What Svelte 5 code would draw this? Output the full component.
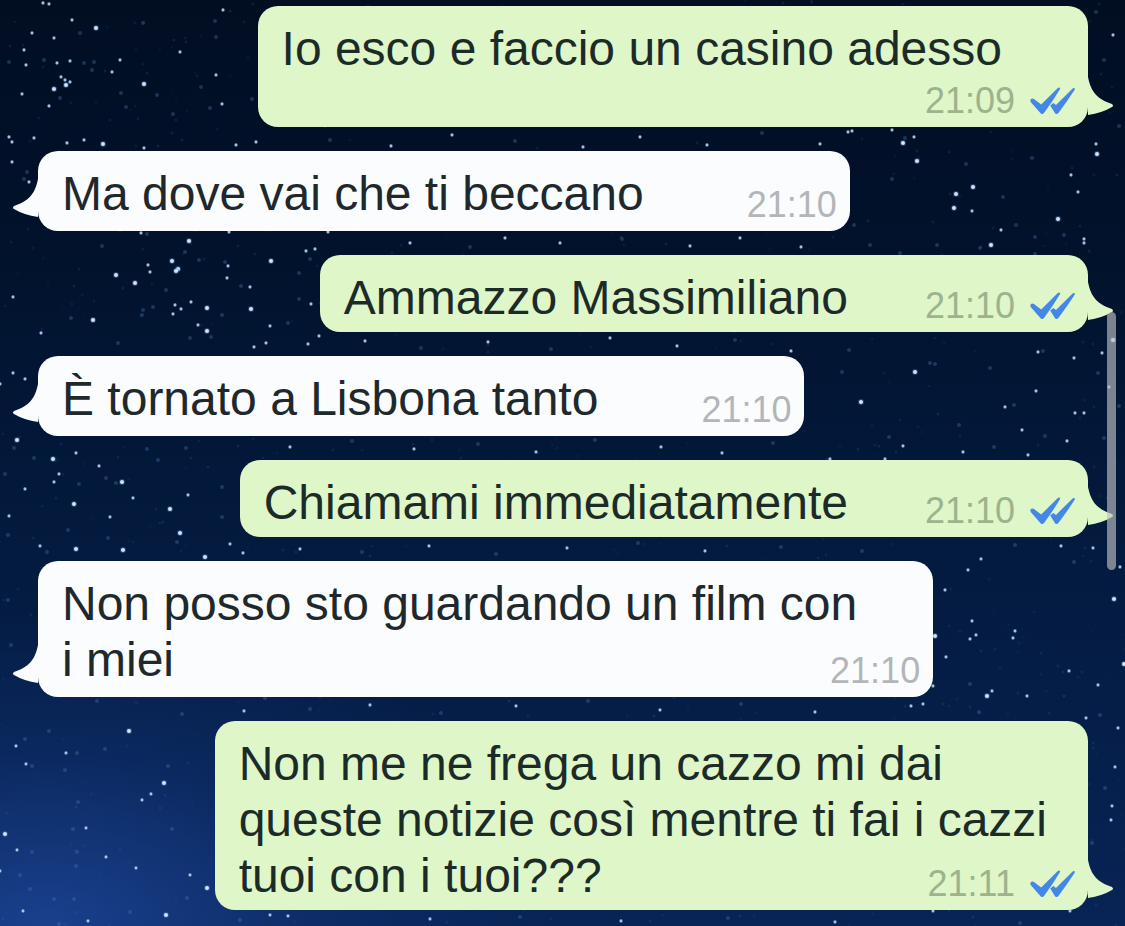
<script>
  const messages = [
    { side: 'out', fit: 'below', time: '21:09', lines: ['Io esco e faccio un casino adesso'] },
    { side: 'in', fit: 'beside', time: '21:10', lines: ['Ma dove vai che ti beccano'] },
    { side: 'out', fit: 'beside', time: '21:10', lines: ['Ammazzo Massimiliano'] },
    { side: 'in', fit: 'beside', time: '21:10', lines: ['È tornato a Lisbona tanto'] },
    { side: 'out', fit: 'beside', time: '21:10', lines: ['Chiamami immediatamente'] },
    { side: 'in', fit: 'tucked', time: '21:10', lines: ['Non posso sto guardando un film con', 'i miei'] },
    {
      side: 'out',
      fit: 'tucked',
      time: '21:11',
      lines: ['Non me ne frega un cazzo mi dai', 'queste notizie così mentre ti fai i cazzi', 'tuoi con i tuoi???'],
    },
  ];

  // x, y, brightness (1 faint, 2 medium, 3 bright)
  const stars = [
    [43,3,2],[49,4,2],[72,20,2],[96,28,3],[32,33,2],[54,38,2],[24,50,2],[26,65,2],[44,60,1],[57,63,2],[70,61,2],[84,63,1],[94,62,1],[120,60,2],[112,72,2],[92,70,1],[61,77,2],[65,80,2],[66,85,3],[70,82,2],[54,89,3],[60,98,1],[22,94,2],[144,84,3],[49,106,2],[9,62,1],[80,33,1],[143,23,1],[180,52,2],[223,10,2],[215,21,1],[216,37,1],[216,75,2],[222,104,2],[201,87,1],[210,108,1],[173,114,1],[126,107,1],[121,93,1],[157,95,1],[252,99,1],[9,137,2],[12,142,2],[34,138,2],[67,143,2],[84,140,2],[103,144,3],[144,148,2],[236,145,2],[256,142,2],
    [12,162,2],[27,172,1],[24,179,1],[29,182,2],[102,246,1],[141,233,2],[147,234,1],[189,241,3],[185,252,1],[229,232,2],[328,232,2],[172,261,3],[199,260,1],[148,265,2],[150,272,2],[178,269,3],[176,271,3],[116,275,3],[135,283,3],[225,262,1],[228,266,2],[227,278,2],[271,261,3],[241,286,1],[250,287,2],[306,251,2],[315,249,2],[310,259,1],[299,273,1],[13,297,2],[71,318,1],[93,320,3],[41,333,2],[153,307,1],[166,290,1],[142,315,1],[143,310,1],[175,305,2],[191,302,2],[181,309,2],[173,314,2],[207,308,3],[251,309,3],[198,325,2],[207,331,3],[211,337,1],[190,338,1],[270,326,2],[311,304,2],[299,299,1],[254,347,2],[266,343,2],[308,344,2],[319,336,2],[118,343,1],[222,315,1],[288,323,1],
    [892,130,2],[914,137,2],[903,143,3],[905,138,1],[917,161,3],[848,132,2],[852,131,2],[892,179,1],[966,164,1],[973,187,3],[956,194,3],[954,208,3],[972,211,2],[1001,230,2],[1016,225,1],[1035,237,1],[991,245,3],[980,248,1],[937,245,1],[1058,219,3],[1078,192,2],[1071,175,2],[1096,144,2],[1097,154,3],[1084,239,2],[1084,243,2],[1032,158,1],[854,225,1],[1003,197,1],[900,253,1],[1035,254,1],[1064,235,1],
    [849,350,1],[915,372,3],[861,402,3],[842,372,1],[1038,352,2],[1043,351,1],[1074,358,2],[1102,353,2],[1113,340,3],[1109,387,2],[1036,391,2],[1005,407,2],[1014,405,1],[990,368,1],[1075,413,2],[1084,413,2],[1022,430,2],[1045,436,1],[1067,441,2],[1028,455,2],[963,452,2],[994,447,1],[903,446,2],[885,459,2],[830,459,2],[889,437,1],[959,425,1],[1119,406,1],[1098,373,1],[935,364,1],[1104,438,1],[930,363,1],
    [13,373,2],[25,379,2],[0,384,2],[17,440,3],[14,448,1],[53,459,3],[34,458,1],[76,453,2],[59,474,2],[54,482,2],[25,489,2],[5,474,1],[99,466,2],[122,482,3],[133,498,2],[74,504,3],[9,516,2],[110,517,2],[40,546,2],[76,549,3],[123,550,3],[47,552,1],[180,533,3],[205,557,3],[170,509,3],[188,495,2],[222,487,1],[222,517,1],[186,448,1],[158,460,1],[147,449,1],[177,542,1],[230,544,2],[243,553,2],[106,478,1],[79,484,1],[116,483,1],[108,538,1],[68,530,1],[8,535,1],
    [862,551,1],[981,559,2],[968,570,2],[1015,545,1],[1061,546,2],[1093,548,2],[1074,562,1],[1120,567,2],[945,590,2],[972,621,2],[935,636,3],[976,635,2],[970,639,2],[1015,631,2],[1013,638,2],[1114,599,3],[946,657,2],[933,686,2],[1069,671,2],[1098,685,2],[1124,664,3],[987,696,3],[992,691,2],[1027,696,2],[970,684,1],[911,706,2],[923,704,2],[979,712,1],[1086,718,2],[1100,715,1],[1118,728,2],[1115,767,2],[1105,788,1],[1112,806,2],[1111,820,2],[1092,843,1],[1070,911,2],[933,911,2],[1020,923,1],
    [8,600,1],[11,645,1],[97,701,1],[129,731,3],[49,731,1],[25,739,1],[16,746,2],[66,753,2],[77,753,1],[26,764,2],[32,766,1],[105,749,1],[65,770,1],[164,783,3],[151,794,2],[142,800,2],[168,766,1],[78,802,1],[86,828,2],[73,829,1],[5,834,3],[17,850,2],[32,852,1],[106,857,2],[136,868,2],[77,852,1],[76,866,1],[172,829,1],[190,875,2],[207,888,3],[0,871,2],[20,875,1],[30,889,1],[54,899,1],[74,899,1],[166,915,3],[88,921,2],[23,911,2],[130,912,1],[187,898,1],[270,915,2],[288,916,2],[240,920,1],[59,924,1],[244,711,2],[182,714,1],[265,698,1],
    [300,549,2],[410,243,2],[470,247,1],[505,238,2],[560,243,2],[622,239,1],[690,246,2],[740,238,2],[801,247,2],[870,245,1],[330,140,1],[391,146,2],[452,135,2],[515,141,1],[583,147,2],[640,137,2],[707,145,2],[762,133,1],[820,144,2],[365,341,2],[421,348,1],[488,342,2],[551,349,1],[610,338,2],[677,346,2],[735,340,1],[791,351,2],[290,447,2],[352,441,1],[414,449,2],[478,444,1],[536,452,2],[595,440,1],[661,447,2],[722,453,2],[773,443,1],[362,552,1],[429,546,2],[496,554,1],[567,548,2],[638,543,1],[705,551,2],[781,547,1],[310,709,1],[370,705,2],[441,713,1],[516,706,2],[588,701,1],[660,710,2],[741,704,1],[815,712,2],[1096,12,1],[1113,35,2],[1104,60,1],[1119,126,1],[430,919,2],[520,917,1],[621,921,2],[728,918,1],[835,922,2],
  ];

  // Faint background dust from a small repeatable generator
  let seed = 7;
  const next = () => (seed = (seed * 16807) % 2147483647) / 2147483647;
  const dust = Array.from({ length: 1500 }, () => [Math.round(next() * 1600), Math.round(next() * 1100), next()]);
</script>

{#snippet meta(m)}
  <span class="meta">
    <time>{m.time}</time>
    {#if m.side === 'out'}
      <svg class="ticks" viewBox="0 0 45 28" role="img" aria-label="Letto">
        <path d="M.6 12.4Q2 10.8 4 11.9L11.2 17.6 27.8 .9Q29.8-.2 30.2 1.8Q23 14 14 26Q12.3 28 10.8 26.4L.9 15.2Q0 13.8.6 12.4Z" />
        <path d="M20.2 18.4L23.4 15.9 26 17.9 42.6 1.4Q44.6.3 45 2.3Q37.5 14 28.4 26Q26.7 28 25.2 26.4Z" />
      </svg>
    {/if}
  </span>
{/snippet}

<main class="chat">
  <svg class="sky" aria-hidden="true">
    {#each dust as [x, y, a]}
      <circle cx={x} cy={y} r="1.5" fill="#3c67a8" opacity={0.06 + a * 0.16} />
    {/each}
    {#each stars as [x, y, b]}
      <circle cx={x} cy={y} r={b === 3 ? 3 : 2} fill="#4d79b5" opacity={b === 1 ? 0.35 : 0.45} />
      {#if b > 1}
        <circle cx={x} cy={y} r={b === 3 ? 2 : 1.4} fill="#dcebff" opacity={b === 3 ? 0.95 : 0.75} />
      {/if}
    {/each}
  </svg>

  <ol class="messages">
    {#each messages as m}
      <li class="bubble {m.side} {m.fit}">
        {#each m.lines as line, i}
          {#if i === m.lines.length - 1}
            <div class="last">
              <span class="line">{line}</span>
              {@render meta(m)}
            </div>
          {:else}
            <div class="line">{line}</div>
          {/if}
        {/each}
        <svg class="tail" viewBox="0 0 26 40" aria-hidden="true">
          <path d="M0 0C3 15 9 22 24 27Q26 29 24 30Q14 36 0 38Z" />
        </svg>
      </li>
    {/each}
  </ol>
  <div class="scrollbar"></div>
</main>

<style>
  :global(body) {
    margin: 0;
    background: #04183a;
  }

  .chat {
    position: relative;
    box-sizing: border-box;
    min-height: 100vh;
    padding: 6px 37px 16px 38px;
    overflow: hidden;
    font-family: 'Liberation Sans', Arial, sans-serif;
    background:
      radial-gradient(ellipse 46% 34% at 4% 100%, rgba(34, 76, 165, 0.7), rgba(20, 58, 130, 0.35) 55%, transparent),
      linear-gradient(to bottom, #010e22 0%, #01122c 28%, #03193b 52%, #051e48 76%, #082456 100%);
  }

  .sky {
    position: absolute;
    inset: 0;
    width: 100%;
    height: 100%;
  }

  .messages {
    position: relative;
    display: flex;
    flex-direction: column;
    gap: 24px;
    margin: 0;
    padding: 0;
    list-style: none;
  }

  .bubble {
    position: relative;
    border-radius: 20px;
    padding: 15px 12px 6px 24px;
  }

  .in {
    align-self: flex-start;
    padding-right: 13px;
    padding-bottom: 9px;
    background: #fafcfe;
    color: #20282c;
    --tail: #fafcfe;
    --time: #b4b5b8;
  }

  .out {
    align-self: flex-end;
    background: #dff6c9;
    color: #1c2b28;
    --tail: #dff6c9;
    --time: #9db38d;
  }

  .line {
    font-size: 48px;
    line-height: 56px;
    white-space: nowrap;
  }

  .last {
    display: flex;
    justify-content: space-between;
    gap: 103px;
  }

  .out .last {
    gap: 77px;
  }

  .below .last {
    flex-direction: column;
    gap: 6px;
  }

  .below .line {
    padding-right: 74px;
  }

  .in.tucked > .line {
    padding-right: 63px;
  }

  .out.tucked > .line {
    padding-right: 29px;
  }

  .meta {
    display: flex;
    align-items: center;
    gap: 15px;
    align-self: flex-end;
    height: 36px;
    margin-bottom: 2px;
    color: var(--time);
    font-size: 36px;
    line-height: 36px;
  }

  .in .meta {
    margin-bottom: -1px;
  }

  .ticks {
    width: 45px;
    height: 28px;
    margin-right: 1px;
    fill: #4387e8;
  }

  .tail {
    position: absolute;
    bottom: 10px;
    left: 100%;
    width: 26px;
    height: 40px;
    fill: var(--tail);
  }

  .in .tail {
    right: 100%;
    bottom: 12px;
    left: auto;
    transform: scaleX(-1);
  }

  .scrollbar {
    position: absolute;
    top: 312px;
    right: 9px;
    width: 9px;
    height: 258px;
    border-radius: 5px;
    background: rgba(190, 190, 195, 0.65);
  }
</style>
